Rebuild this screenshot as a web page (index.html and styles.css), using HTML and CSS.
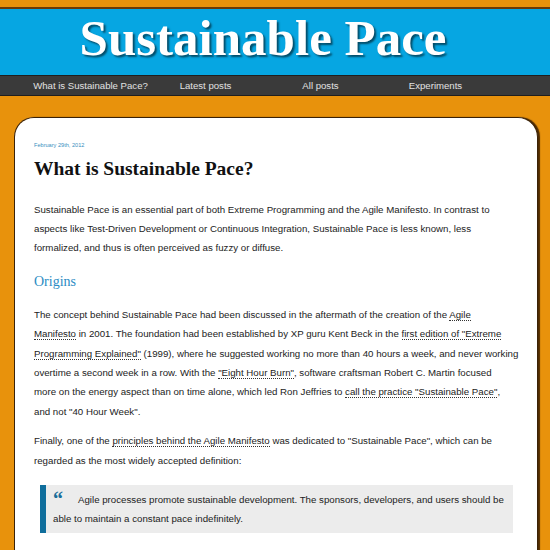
FILE: index.html
```html
<!DOCTYPE html>
<html>
<head>
<meta charset="utf-8">
<link rel="stylesheet" href="styles.css">
</head>
<body>
<header class="masthead">
  <h1 class="site-title">Sustainable Pace</h1>
</header>
<nav class="nav">
  <a class="nav-item" href="#">What is Sustainable Pace?</a>
  <a class="nav-item" href="#">Latest posts</a>
  <a class="nav-item" href="#">All posts</a>
  <a class="nav-item" href="#">Experiments</a>
</nav>
<main class="card">
  <div class="date">February 29th, 2012</div>
  <h2 class="post-title">What is Sustainable Pace?</h2>
  <p>Sustainable Pace is an essential part of both Extreme Programming and the Agile Manifesto. In contrast to<br>aspects like Test-Driven Development or Continuous Integration, Sustainable Pace is less known, less<br>formalized, and thus is often perceived as fuzzy or diffuse.</p>
  <h3 class="section">Origins</h3>
  <p>The concept behind Sustainable Pace had been discussed in the aftermath of the creation of the <a href="#">Agile<br>Manifesto</a> in 2001. The foundation had been established by XP guru Kent Beck in the <a href="#">first edition of "Extreme<br>Programming Explained"</a> (1999), where he suggested working no more than 40 hours a week, and never working<br>overtime a second week in a row. With the <a href="#">"Eight Hour Burn"</a>, software craftsman Robert C. Martin focused<br>more on the energy aspect than on time alone, which led Ron Jeffries to <a href="#">call the practice "Sustainable Pace"</a>,<br>and not "40 Hour Week".</p>
  <p>Finally, one of the <a href="#">principles behind the Agile Manifesto</a> was dedicated to "Sustainable Pace", which can be<br>regarded as the most widely accepted definition:</p>
  <blockquote class="quote"><span class="qmark">&ldquo;</span>Agile processes promote sustainable development. The sponsors, developers, and users should be<br>able to maintain a constant pace indefinitely.</blockquote>
</main>
</body>
</html>
```
FILE: styles.css
```css
html, body {
  margin: 0;
  padding: 0;
}
body {
  background: #e8920c;
  font-family: "Liberation Sans", Arial, sans-serif;
  color: #222;
  height: 550px;
  overflow: hidden;
}
.masthead {
  margin-top: 7px;
  border-top: 2px solid #6a3a08;
  background: #06a6e2;
  height: 66px;
  border-bottom: 1px solid #1f1f1f;
  display: flex;
  justify-content: center;
}
.site-title {
  margin: 0;
  padding-right: 24px;
  font-family: "Liberation Serif", "Times New Roman", serif;
  font-weight: bold;
  font-size: 51px;
  line-height: 58px;
  color: #fff;
  text-shadow: 2px 2px 2px rgba(0,0,0,0.55);
}
.nav {
  background: #3a3a3a;
  height: 19px;
  border-bottom: 1px solid #1f1f1f;
  display: grid;
  grid-template-columns: repeat(4, 115px);
  padding-left: 33px;
}
.nav-item {
  color: #e2e2e2;
  text-decoration: none;
  font-size: 9.6px;
  line-height: 20px;
  text-align: center;
}
.card {
  margin: 21px 12px 0 14px;
  background: #fff;
  border: 1px solid #3b2208;
  border-bottom: 0;
  border-radius: 20px 20px 0 0;
  box-shadow: 2px 0 1px rgba(50,25,0,0.85);
  padding: 23px 18px 40px 19px;
}
.date {
  color: #3a8fc0;
  font-size: 5.6px;
  line-height: 8px;
}
.post-title {
  font-family: "Liberation Serif", "Times New Roman", serif;
  font-size: 19.5px;
  line-height: 24px;
  margin: 8px 0 18.5px;
  color: #111;
}
p {
  font-size: 9.7px;
  line-height: 19.4px;
  margin: 0 0 10px;
  white-space: nowrap;
}
p a {
  color: #222;
  text-decoration: none;
  border-bottom: 1px dotted #333;
}
.section {
  font-family: "Liberation Serif", "Times New Roman", serif;
  font-weight: normal;
  font-size: 14px;
  line-height: 18px;
  color: #2b8cc4;
  margin: 15px 0 14px;
}
.quote {
  margin: 15px 6px 0 6px;
  background: #ececec;
  border-left: 6px solid #0f6e9c;
  padding: 5px 10px 4px 7px;
  font-size: 9.7px;
  line-height: 19.4px;
  white-space: nowrap;
}
.qmark {
  display: inline-block;
  width: 25px;
  font-family: "Liberation Serif", serif;
  font-weight: bold;
  font-size: 20px;
  color: #1a6e9a;
  vertical-align: top;
  line-height: 18px;
}
```
